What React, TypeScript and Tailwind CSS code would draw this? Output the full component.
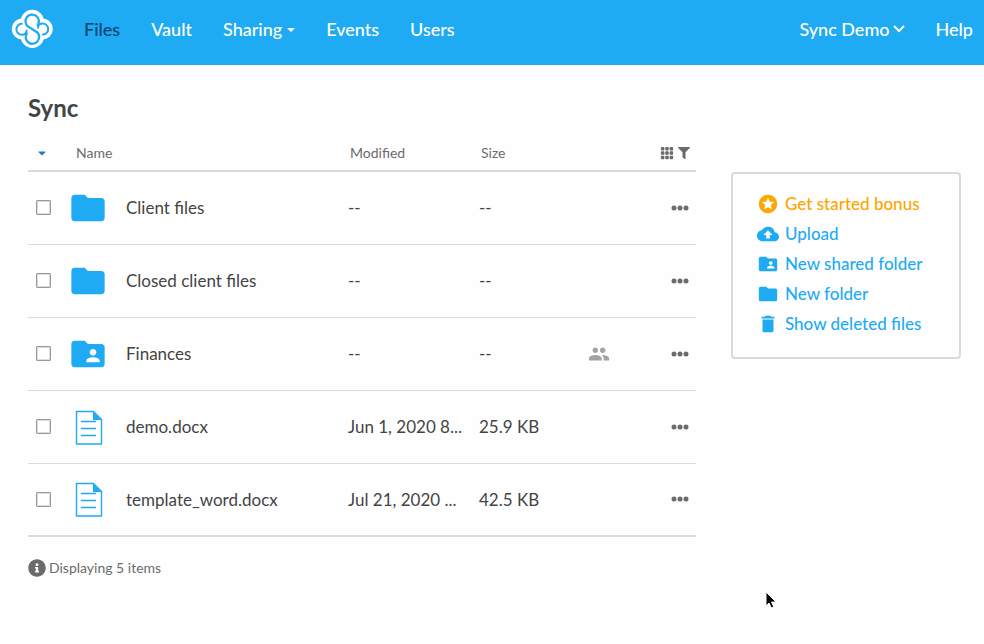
import React from 'react';
import { FaCaretDown, FaFilter, FaInfoCircle } from 'react-icons/fa';
import { BsGrid3X3GapFill } from 'react-icons/bs';
import {
  MdCloudUpload,
  MdDelete,
  MdFolder,
  MdFolderShared,
  MdGroup,
  MdStars,
} from 'react-icons/md';

type FileKind = 'folder' | 'shared' | 'document';

interface FileRow {
  name: string;
  kind: FileKind;
  modified: string;
  size: string;
}

const files: FileRow[] = [
  { name: 'Client files', kind: 'folder', modified: '--', size: '--' },
  { name: 'Closed client files', kind: 'folder', modified: '--', size: '--' },
  { name: 'Finances', kind: 'shared', modified: '--', size: '--' },
  { name: 'demo.docx', kind: 'document', modified: 'Jun 1, 2020 8...', size: '25.9 KB' },
  { name: 'template_word.docx', kind: 'document', modified: 'Jul 21, 2020 ...', size: '42.5 KB' },
];

const actions = [
  { label: 'Get started bonus', icon: MdStars, color: 'text-[#ffa400]' },
  { label: 'Upload', icon: MdCloudUpload, color: 'text-[#1fabf3]' },
  { label: 'New shared folder', icon: MdFolderShared, color: 'text-[#1fabf3]' },
  { label: 'New folder', icon: MdFolder, color: 'text-[#1fabf3]' },
  { label: 'Show deleted files', icon: MdDelete, color: 'text-[#1fabf3]' },
];

const Logo: React.FC = () => (
  <svg width="42" height="40" viewBox="0 -1 42 40" aria-hidden="true">
    <g fill="#fff">
      <circle cx="21.3" cy="11.4" r="11.6" />
      <circle cx="21.3" cy="26.4" r="11.6" />
      <circle cx="11.4" cy="19" r="10.6" />
      <circle cx="31.2" cy="19" r="10.6" />
    </g>
    <g fill="none" stroke="#1fabf3" strokeWidth="2" strokeLinecap="round">
      <path d="M26.8 15A6.7 6.7 0 1 0 16.6 16.2L26 22.2A6.7 6.7 0 1 1 15.8 23.4" strokeWidth="2.3" />
      <path d="M10.8 13.8a5.5 5.5 0 0 0 .2 11c2.9 0 4.4-1.8 4.6-4.2" />
      <path d="M31.8 24.6a5.5 5.5 0 0 0-.2-11c-2.9 0-4.4 1.8-4.6 4.2" />
    </g>
  </svg>
);

const ChevronIcon: React.FC = () => (
  <svg width="12" height="8" viewBox="0 0 12 8" fill="none" stroke="currentColor" strokeWidth="2" aria-hidden="true">
    <path d="M1 1l5 5 5-5" />
  </svg>
);

const SmallCaret: React.FC = () => (
  <svg width="8" height="4" viewBox="0 0 8 4" fill="currentColor" className="mt-0.5" aria-hidden="true">
    <path d="M0 0h8L4 4z" />
  </svg>
);

const MoreIcon: React.FC = () => (
  <svg width="18" height="6" viewBox="0 0 18 6" fill="currentColor" aria-hidden="true">
    <circle cx="3" cy="3" r="2.5" />
    <circle cx="9" cy="3" r="2.5" />
    <circle cx="15" cy="3" r="2.5" />
  </svg>
);

const DocumentIcon: React.FC = () => (
  <svg width="40" height="36" viewBox="0 0 40 36" fill="none" stroke="#1fabf3" aria-hidden="true">
    <path d="M8.5 2.5h17l8 8V35h-25z" strokeWidth="1.4" strokeLinejoin="round" />
    <path d="M25 2.5V11h8.500z" fill="#1fabf3" stroke="none" />
    <path d="M13 12.5h15M13 19.5h15M13 26.5h15" strokeWidth="1.4" />
  </svg>
);

const FileIcon: React.FC<{ kind: FileKind }> = ({ kind }) => {
  if (kind === 'document') return <DocumentIcon />;
  if (kind === 'shared') return <MdFolderShared className="size-10 text-[#1fabf3]" />;
  return <MdFolder className="size-10 text-[#1fabf3]" />;
};

const Header: React.FC = () => (
  <header className="flex h-[65px] items-center bg-[#1fabf3] pr-[11px] pb-2 pl-[11px] text-lg font-medium text-white">
    <a href="#" aria-label="Sync home">
      <Logo />
    </a>
    <nav className="ml-[31px] flex items-center gap-[31px]">
      <a href="#" className="text-[#0b4270]">Files</a>
      <a href="#">Vault</a>
      <button className="flex items-center gap-[5px]">
        Sharing
        <SmallCaret />
      </button>
      <a href="#">Events</a>
      <a href="#">Users</a>
    </nav>
    <div className="ml-auto flex items-center gap-[31px]">
      <button className="flex items-center gap-[3px]">
        Sync Demo
        <ChevronIcon />
      </button>
      <a href="#">Help</a>
    </div>
  </header>
);

const FileTable: React.FC = () => (
  <table className="w-full table-fixed border-b-2 border-[#dadada] text-left">
    <colgroup>
      <col className="w-10" />
      <col className="w-[58px]" />
      <col />
      <col className="w-[131px]" />
      <col className="w-[109px]" />
      <col className="w-[50px]" />
      <col className="w-[58px]" />
    </colgroup>
    <thead>
      <tr className="h-9 border-b-2 border-[#dadada] text-sm text-[#6b6b6b]">
        <th className="pl-2">
          <button aria-label="Sort" className="block text-[#2a78b8]">
            <FaCaretDown className="size-3" />
          </button>
        </th>
        <th colSpan={2} className="pl-2 font-normal">Name</th>
        <th className="pl-0.5 font-normal">Modified</th>
        <th className="pl-0.5 font-normal">Size</th>
        <th colSpan={2}>
          <div className="flex items-center justify-end gap-1 pr-1.5">
            <button aria-label="Grid view">
              <BsGrid3X3GapFill className="size-3.5" />
            </button>
            <button aria-label="Filter">
              <FaFilter className="size-3" />
            </button>
          </div>
        </th>
      </tr>
    </thead>
    <tbody>
      {files.map((file) => (
        <tr key={file.name} className="h-[73px] border-b border-[#dadada] text-[17px]">
          <td className="pl-2">
            <input
              type="checkbox"
              aria-label={`Select ${file.name}`}
              className="block size-[15px] appearance-none rounded-[1px] border border-[#999] bg-white shadow-[inset_0_0_0_1px_#ddd] checked:bg-[#1fabf3]"
            />
          </td>
          <td>
            <FileIcon kind={file.kind} />
          </td>
          <td>{file.name}</td>
          <td className="whitespace-nowrap">{file.modified}</td>
          <td>{file.size}</td>
          <td>{file.kind === 'shared' && <MdGroup className="size-[22px] text-[#a3a3a3]" />}</td>
          <td className="pr-[7px]">
            <button aria-label={`More actions for ${file.name}`} className="ml-auto block text-[#6b6b6b]">
              <MoreIcon />
            </button>
          </td>
        </tr>
      ))}
    </tbody>
  </table>
);

const ActionPanel: React.FC = () => (
  <aside className="mt-20 w-[230px] shrink-0 rounded border-2 border-[#dadada] px-6 pt-[15px] pb-[18px]">
    <ul>
      {actions.map(({ label, icon: Icon, color }) => (
        <li key={label}>
          <button className={`flex h-[30px] items-center gap-1.5 text-[17px] font-medium ${color}`}>
            <Icon className="size-[22px]" />
            {label}
          </button>
        </li>
      ))}
    </ul>
  </aside>
);

const Cursor: React.FC = () => (
  <svg width="14" height="20" viewBox="0 0 14 20" className="absolute top-[590px] left-[764px]" aria-hidden="true">
    <path d="M2 2v14l3-3 2.4 5 2.4-1.1-2.3-4.900H12z" fill="#000" stroke="#fff" strokeWidth="1" />
  </svg>
);

const App: React.FC = () => {
  return (
    <div className="relative min-h-screen bg-[#fefefe] font-['Lato',sans-serif] text-[#444]">
      <Header />
      <main className="flex items-start gap-[35px] pt-[27px] pr-[23px] pl-7">
        <section className="min-w-0 flex-1">
          <h1 className="mb-[11px] text-2xl font-bold">Sync</h1>
          <FileTable />
          <p className="mt-[21px] flex items-center gap-[3px] text-sm text-[#6b6b6b]">
            <FaInfoCircle className="size-[18px]" />
            Displaying 5 items
          </p>
        </section>
        <ActionPanel />
      </main>
      <Cursor />
    </div>
  );
};

export default App;
